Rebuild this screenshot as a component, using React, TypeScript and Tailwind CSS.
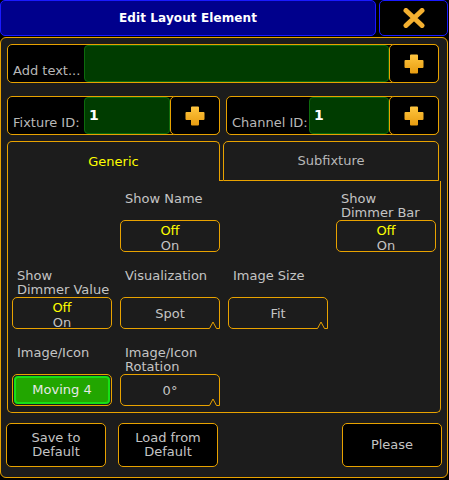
import React from "react";

const OR = "border-[#e8a200]";
const font = { fontFamily: '"DejaVu Sans", "Liberation Sans", sans-serif' };

function Plus() {
  return (
    <svg width="22" height="22" viewBox="0 0 22 22">
      <defs>
        <linearGradient id="pg" x1="0" y1="0" x2="0" y2="1">
          <stop offset="0" stopColor="#ffc640" />
          <stop offset="1" stopColor="#e89c10" />
        </linearGradient>
      </defs>
      <path
        d="M8 1.5 H14 Q15 1.5 15 2.5 V7 H19.5 Q20.5 7 20.5 8 V14 Q20.5 15 19.5 15 H15 V19.5 Q15 20.5 14 20.5 H8 Q7 20.5 7 19.5 V15 H2.5 Q1.5 15 1.5 14 V8 Q1.5 7 2.5 7 H7 V2.5 Q7 1.5 8 1.5 Z"
        fill="url(#pg)"
      />
    </svg>
  );
}

function PlusBtn() {
  return (
    <div className={`-my-px -mr-px w-[50px] shrink-0 flex items-center justify-center rounded-[5px] border ${OR} bg-black`}>
      <Plus />
    </div>
  );
}

function Notch() {
  return (
    <svg className="absolute right-[-1px] bottom-[-1px]" width="14" height="12" viewBox="0 0 14 12">
      <rect x="0" y="4" width="14" height="8" fill="#1c1c1c" />
      <path d="M0 11.5 H3.5 L7 5 L10.5 11.5 H13.5 V0" fill="none" stroke="#e8a200" strokeWidth="1" />
    </svg>
  );
}

function Label({ lines }: { lines: string[] }) {
  return (
    <div className="h-[28px] pl-[5px] text-[13px] leading-[14px] text-[#c4c4c4] flex flex-col">
      {lines.map((l) => (
        <span key={l} className="whitespace-nowrap">{l}</span>
      ))}
    </div>
  );
}

function Toggle() {
  return (
    <div className={`h-[32px] w-[100px] rounded-[5px] border ${OR} flex flex-col items-center justify-center pt-[3px] text-[13px] leading-[15px]`}>
      <span className="text-[#ffff00]">Off</span>
      <span className="text-[#c4c4c4]">On</span>
    </div>
  );
}

function Drop({ text }: { text: string }) {
  return (
    <div className={`relative h-[32px] w-[100px] rounded-[5px] border ${OR} flex items-center justify-center pt-[1px] text-[13px] text-[#c4c4c4]`}>
      {text}
      <Notch />
    </div>
  );
}

function BottomBtn({ lines }: { lines: string[] }) {
  return (
    <div className={`h-[44px] w-[100px] rounded-[5px] border ${OR} bg-black flex flex-col items-center justify-center text-[13px] leading-[14px] text-[#c4c4c4]`}>
      {lines.map((l) => (
        <span key={l}>{l}</span>
      ))}
    </div>
  );
}

export default function App() {
  return (
    <div className="w-[449px] h-[480px] bg-black overflow-hidden" style={font}>
      {/* title row */}
      <div className="flex h-[36px] gap-[3px]">
        <div className="w-[376px] rounded-[5px] border border-[#1a1aff] bg-[#00008c] flex items-center justify-center text-white font-bold text-[12px] tracking-[0.1px]">
          Edit Layout Element
        </div>
        <div className="w-[69px] rounded-[5px] border border-[#1a1aff] bg-black flex items-center justify-center">
          <svg width="22" height="20" viewBox="0 0 22 20">
            <path d="M3 2.5 L19 17.5 M19 2.5 L3 17.5" stroke="#f4b030" strokeWidth="5" strokeLinecap="round" />
          </svg>
        </div>
      </div>

      {/* main panel */}
      <div className={`mt-[1px] h-[441px] w-[448px] rounded-[6px] border ${OR} bg-[#1c1c1c] pl-[6px] pr-[8px] pt-[6px]`}>
        {/* add text row */}
        <div className={`flex h-[39px] rounded-[5px] border ${OR} bg-black`}>
          <div className="w-[76px] shrink-0 flex items-end pl-[5px] pb-[2px] text-[13px] text-[#b8b8b8] whitespace-nowrap">
            Add text...
          </div>
          <div className="flex-1 rounded-[4px] border border-[#0c6a0c] bg-[#003c00]" />
          <PlusBtn />
        </div>

        {/* fixture / channel row */}
        <div className="mt-[13px] flex gap-[6px]">
          <div className={`flex h-[39px] w-[214px] rounded-[5px] border ${OR} bg-black`}>
            <div className="w-[76px] shrink-0 flex items-end pl-[5px] pb-[2px] text-[13px] text-[#b8b8b8] whitespace-nowrap">
              Fixture ID:
            </div>
            <div className="flex-1 rounded-[4px] border border-[#0c6a0c] bg-[#003c00] pl-[4px] pt-[10px] text-white font-bold text-[14px] leading-[14px]">
              1
            </div>
            <PlusBtn />
          </div>
          <div className={`flex h-[39px] w-[214px] rounded-[5px] border ${OR} bg-black`}>
            <div className="w-[82px] shrink-0 flex items-end pl-[5px] pb-[2px] text-[13px] text-[#b8b8b8] whitespace-nowrap">
              Channel ID:
            </div>
            <div className="flex-1 rounded-[4px] border border-[#0c6a0c] bg-[#003c00] pl-[4px] pt-[10px] text-white font-bold text-[14px] leading-[14px]">
              1
            </div>
            <PlusBtn />
          </div>
        </div>

        {/* tabs */}
        <div className="mt-[6px] flex items-end h-[40px]">
          <div className={`h-[40px] w-[214px] rounded-t-[5px] border-l border-t border-r ${OR} flex items-center justify-center text-[13px] text-[#ffff00]`}>
            Generic
          </div>
          <div className="h-[1px] w-[3px] bg-[#e8a200]" />
          <div className={`h-[40px] w-[217px] rounded-t-[5px] border ${OR} flex items-center justify-center text-[13px] text-[#b8b8b8]`}>
            Subfixture
          </div>
        </div>

        {/* content */}
        <div className={`h-[232px] w-[434px] rounded-b-[5px] border-l border-r border-b ${OR} pl-[4px] pt-[11px]`}>
          <div className="grid grid-cols-[100px_100px_100px_100px] gap-x-[8px] gap-y-[17px]">
            <div />
            <div>
              <Label lines={["Show Name"]} />
              <Toggle />
            </div>
            <div />
            <div>
              <Label lines={["Show", "Dimmer Bar"]} />
              <Toggle />
            </div>

            <div>
              <Label lines={["Show", "Dimmer Value"]} />
              <Toggle />
            </div>
            <div>
              <Label lines={["Visualization"]} />
              <Drop text="Spot" />
            </div>
            <div>
              <Label lines={["Image Size"]} />
              <Drop text="Fit" />
            </div>
            <div />

            <div>
              <Label lines={["Image/Icon"]} />
              <div className={`h-[32px] w-[100px] rounded-[5px] border ${OR} p-[1px]`}>
                <div className="h-full w-full rounded-[4px] border-2 border-[#16e016] bg-[#22a600] flex items-center justify-center text-[13px] text-[#e8e8e8]">
                  Moving 4
                </div>
              </div>
            </div>
            <div>
              <Label lines={["Image/Icon", "Rotation"]} />
              <Drop text="0°" />
            </div>
          </div>
        </div>

        {/* bottom buttons */}
        <div className="mt-[10px] -ml-[1px] -mr-[3px] flex gap-[12px]">
          <BottomBtn lines={["Save to", "Default"]} />
          <BottomBtn lines={["Load from", "Default"]} />
          <div className="flex-1" />
          <BottomBtn lines={["Please"]} />
        </div>
      </div>
    </div>
  );
}
